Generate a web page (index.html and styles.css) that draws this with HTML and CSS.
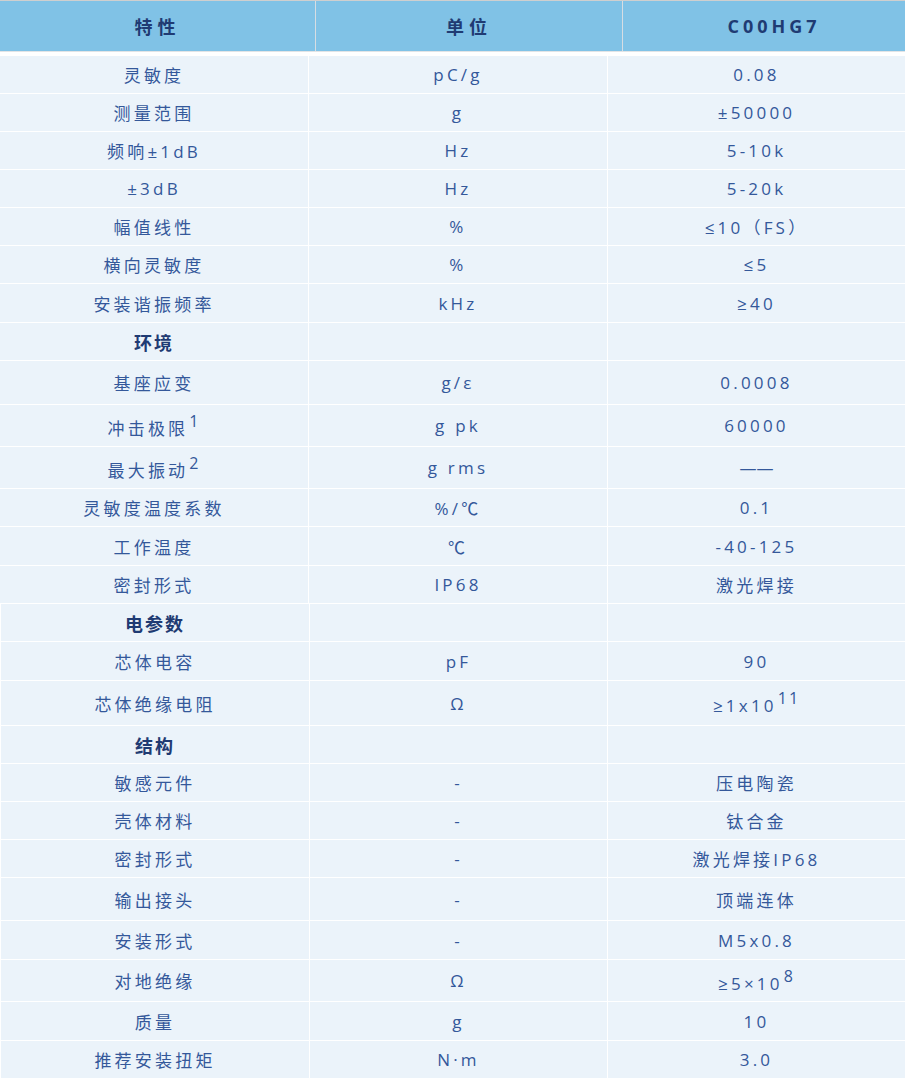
FILE: index.html
```html
<!DOCTYPE html>
<html lang="zh-CN">
<head>
<meta charset="utf-8">
<title>C00HG7</title>
<link rel="stylesheet" href="styles.css">
</head>
<body>
<div class="sheet">
  <div class="head">
    <div class="hc">特性</div>
    <div class="hc">单位</div>
    <div class="hc model">C00HG7</div>
  </div>
  <div class="body">
    <div class="row"><div class="c">灵敏度</div><div class="c">pC/g</div><div class="c">0.08</div></div>
    <div class="row"><div class="c">测量范围</div><div class="c">g</div><div class="c">±50000</div></div>
    <div class="row"><div class="c">频响±1dB</div><div class="c">Hz</div><div class="c">5-10k</div></div>
    <div class="row"><div class="c">±3dB</div><div class="c">Hz</div><div class="c">5-20k</div></div>
    <div class="row"><div class="c">幅值线性</div><div class="c">%</div><div class="c">≤10（FS）</div></div>
    <div class="row"><div class="c">横向灵敏度</div><div class="c">%</div><div class="c">≤5</div></div>
    <div class="row h38"><div class="c">安装谐振频率</div><div class="c">kHz</div><div class="c">≥40</div></div>
    <div class="row"><div class="c sec">环境</div><div class="c"></div><div class="c"></div></div>
    <div class="row h43"><div class="c">基座应变</div><div class="c">g/ε</div><div class="c">0.0008</div></div>
    <div class="row h41"><div class="c"><span class="t">冲击极限<sup>1</sup></span></div><div class="c">g pk</div><div class="c">60000</div></div>
    <div class="row h41"><div class="c"><span class="t">最大振动<sup>2</sup></span></div><div class="c">g rms</div><div class="c dash">——</div></div>
    <div class="row"><div class="c">灵敏度温度系数</div><div class="c">%/℃</div><div class="c">0.1</div></div>
    <div class="row h38"><div class="c">工作温度</div><div class="c">℃</div><div class="c">-40-125</div></div>
    <div class="row"><div class="c">密封形式</div><div class="c">IP68</div><div class="c">激光焊接</div></div>
    <div class="row sh"><div class="c sec">电参数</div><div class="c"></div><div class="c"></div></div>
    <div class="row sh h38"><div class="c">芯体电容</div><div class="c">pF</div><div class="c">90</div></div>
    <div class="row sh h44"><div class="c">芯体绝缘电阻</div><div class="c">Ω</div><div class="c"><span class="t">≥1x10<sup>11</sup></span></div></div>
    <div class="row sh"><div class="c sec">结构</div><div class="c"></div><div class="c"></div></div>
    <div class="row sh"><div class="c">敏感元件</div><div class="c">-</div><div class="c">压电陶瓷</div></div>
    <div class="row sh"><div class="c">壳体材料</div><div class="c">-</div><div class="c">钛合金</div></div>
    <div class="row sh"><div class="c">密封形式</div><div class="c">-</div><div class="c">激光焊接IP68</div></div>
    <div class="row sh h42"><div class="c">输出接头</div><div class="c">-</div><div class="c">顶端连体</div></div>
    <div class="row sh h38"><div class="c">安装形式</div><div class="c">-</div><div class="c">M5x0.8</div></div>
    <div class="row sh h41"><div class="c">对地绝缘</div><div class="c">Ω</div><div class="c"><span class="t">≥5×10<sup>8</sup></span></div></div>
    <div class="row sh h38"><div class="c">质量</div><div class="c">g</div><div class="c">10</div></div>
    <div class="row sh"><div class="c">推荐安装扭矩</div><div class="c">N·m</div><div class="c">3.0</div></div>
  </div>
</div>
</body>
</html>
```
FILE: styles.css
```css
html, body {
  margin: 0;
  padding: 0;
  background: #ffffff;
}

.sheet {
  width: 905px;
  font-family: "Open Sans", "Noto Sans CJK SC", sans-serif;
}

.head {
  display: grid;
  grid-template-columns: 315px 306px 282px;
  column-gap: 1px;
  height: 50px;
  background: #d6dde3;
  border-top: 1px solid #cfcfcf;
  border-bottom: 1px solid #e2e4e6;
  margin-bottom: 4px;
}

.hc {
  background: #80c2e6;
  display: flex;
  align-items: center;
  justify-content: center;
  font-family: "Noto Sans CJK SC", sans-serif;
  font-size: 18px;
  font-weight: 700;
  letter-spacing: 5px;
  color: #1f3b73;
}

.hc.model {
  font-family: "Open Sans", "Noto Sans CJK SC", sans-serif;
  letter-spacing: 4px;
  padding-left: 20px;
}

.body {
  display: flex;
  flex-direction: column;
  row-gap: 1px;
  background: #ffffff;
}

.row {
  display: grid;
  grid-template-columns: 308px 298px 297px;
  column-gap: 1px;
  height: 37px;
}

.row.sh {
  margin-left: 1px;
  grid-template-columns: 308px 297px 297px;
}

.row.h38 { height: 38px; }
.row.h41 { height: 41px; }
.row.h42 { height: 42px; }
.row.h43 { height: 43px; }
.row.h44 { height: 44px; }

.c {
  background: #ebf3fa;
  display: flex;
  align-items: center;
  justify-content: center;
  font-size: 17px;
  letter-spacing: 3.2px;
  color: #34589a;
  white-space: nowrap;
}

.c.dash {
  letter-spacing: 0;
}

.c .t {
  display: block;
  line-height: 24px;
  padding-top: 2px;
}

.c.sec {
  font-family: "Noto Sans CJK SC", sans-serif;
  font-weight: 700;
  font-size: 18px;
  letter-spacing: 2px;
  color: #1f3b73;
}

.c sup {
  font-size: 16px;
  line-height: 1;
  vertical-align: 8px;
  letter-spacing: 2px;
  margin-left: 1px;
}
```
